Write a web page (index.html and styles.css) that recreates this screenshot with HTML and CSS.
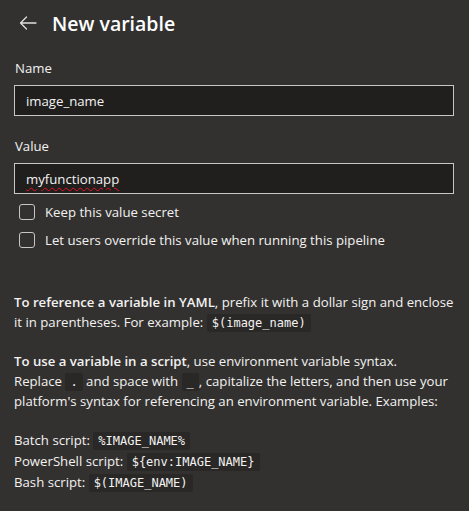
FILE: index.html
```html
<!DOCTYPE html>
<html lang="en">
<head>
<meta charset="utf-8">
<title>New variable</title>
<link rel="stylesheet" href="styles.css">
</head>
<body>
<div class="panel">
  <header class="header">
    <button class="back" aria-label="Back">
      <svg width="18" height="14" viewBox="0 0 18 14" fill="none" stroke="#e1dfdd" stroke-width="1.3" stroke-linecap="round" stroke-linejoin="round"><path d="M17 7H1.5M7.5 1L1.5 7l6 6"/></svg>
    </button>
    <h1 class="title">New variable</h1>
  </header>

  <div class="field">
    <label class="label">Name</label>
    <div class="input">image_name</div>
  </div>

  <div class="field">
    <label class="label">Value</label>
    <div class="input"><span class="misspelled">myfunctionapp</span></div>
  </div>

  <div class="checks">
    <div class="check"><span class="box"></span><span>Keep this value secret</span></div>
    <div class="check"><span class="box"></span><span>Let users override this value when running this pipeline</span></div>
  </div>

  <div class="info">
    <p><strong>To reference a variable in YAML</strong>, prefix it with a dollar sign and enclose it in parentheses. For example: <code>$(image_name)</code></p>
    <p><strong>To use a variable in a script</strong>, use environment variable syntax.<br>Replace <code>.</code> and space with <code>_</code>, capitalize the letters, and then use your platform's syntax for referencing an environment variable. Examples:</p>
    <div class="examples">
      <div>Batch script: <code>%IMAGE_NAME%</code></div>
      <div>PowerShell script: <code>${env:IMAGE_NAME}</code></div>
      <div>Bash script: <code>$(IMAGE_NAME)</code></div>
    </div>
  </div>
</div>
</body>
</html>
```

FILE: styles.css
```css
* { box-sizing: border-box; }
html, body {
  margin: 0;
  background: #323130;
}
body {
  font-family: "Open Sans", "Noto Sans", sans-serif;
  font-size: 13.2px;
  color: #f3f2f1;
  width: 469px;
  height: 511px;
  overflow: hidden;
}
.panel {
  padding: 0 15px 0 14px;
}
.header {
  display: flex;
  align-items: center;
  height: 46px;
  gap: 15px;
}
.back {
  background: none;
  border: 0;
  padding: 0;
  margin-left: 5px;
  display: flex;
  align-items: center;
  cursor: pointer;
}
.title {
  margin: 0;
  font-size: 19.5px;
  font-weight: 600;
  color: #ffffff;
}
.field {
  display: flex;
  flex-direction: column;
  margin-top: 12px;
}
.field + .field { margin-top: 20px; }
.label {
  line-height: 20px;
  font-weight: 500;
  margin-left: 1px;
  margin-bottom: 7px;
  color: #f3f2f1;
}
.input {
  height: 31px;
  border: 1px solid #c8c6c4;
  background: #201f1e;
  padding: 0 11px;
  display: flex;
  align-items: center;
  color: #f3f2f1;
}
.misspelled {
  text-decoration: underline wavy #e81123;
  text-decoration-thickness: 1px;
  text-underline-offset: 3px;
}
.checks {
  display: flex;
  flex-direction: column;
  gap: 12px;
  margin-top: 10px;
  padding-left: 5px;
}
.check {
  display: flex;
  align-items: center;
  gap: 10px;
  line-height: 16px;
}
.box {
  width: 16px;
  height: 16px;
  border: 1px solid #c8c6c4;
  border-radius: 3px;
  flex: none;
}
.info {
  margin-top: 44px;
  line-height: 20px;
  color: #f3f2f1;
}
.info p { margin: 0 0 19px; }
.info strong { font-weight: 600; }
code {
  font-family: "DejaVu Sans Mono", "Liberation Mono", monospace;
  font-size: 12px;
  line-height: 15px;
  background: #292827;
  padding: 2px 5px;
  border-radius: 2px;
  color: #f3f2f1;
}
.examples {
  display: flex;
  flex-direction: column;
  gap: 1px;
}
```
